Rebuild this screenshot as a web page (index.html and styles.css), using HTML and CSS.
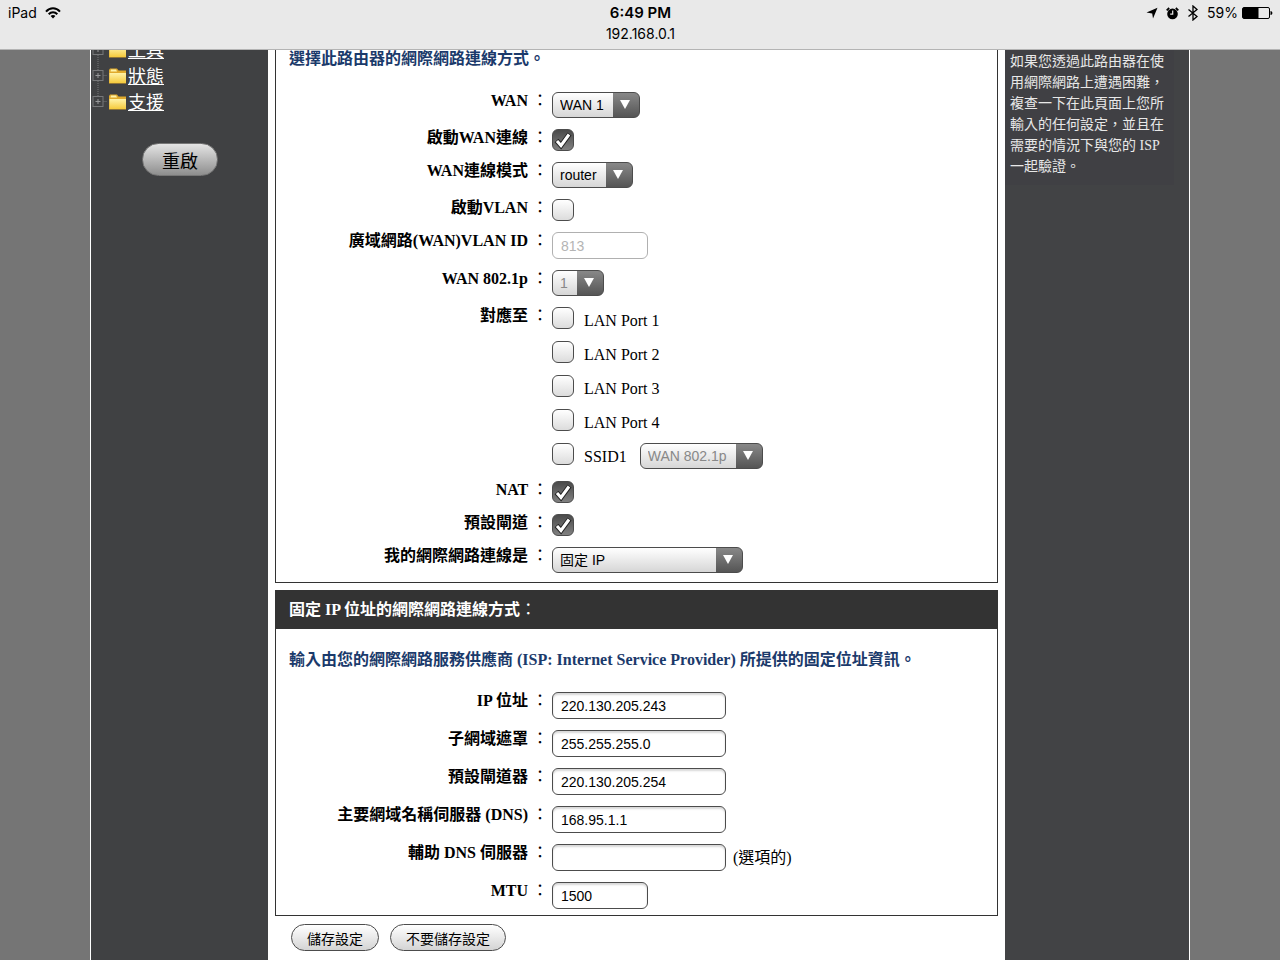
FILE: index.html
```
<!DOCTYPE html>
<html lang="zh-Hant">
<head>
    <meta charset="UTF-8">
    <meta name="viewport" content="width=device-width, initial-scale=1.0">
    <title>192.168.0.1</title>
    <link rel="stylesheet" href="styles.css">
</head>
<body>
    <header class="topbar">
        <div class="status">
            <div class="status-left">
                <span>iPad</span>
                <svg width="16" height="12" viewBox="0 0 16 12" fill="none" stroke="#000" stroke-width="2">
                    <path d="M1 4.6C5 .2 11 .2 15 4.6M3.7 7.2c2.4-2.6 6.2-2.6 8.6 0"/>
                    <path d="M8 11.5L5.6 9.1c1.3-1.4 3.5-1.4 4.8 0z" fill="#000" stroke="none"/>
                </svg>
            </div>
            <strong class="time">6:49 PM</strong>
            <div class="status-right">
                <svg width="12" height="12" viewBox="0 0 12 12"><path d="M11.5.7L7 11.6 6.2 6.4.5 5.4z"/></svg>
                <svg width="13" height="13" viewBox="0 0 13 13">
                    <circle cx="6.5" cy="6.9" r="5.3"/>
                    <path d="M.7 3.4L3.2 1M9.8 1l2.5 2.4" stroke="#000" stroke-width="1.8"/>
                    <path d="M6.7 3.6v3.6H4.200" fill="none" stroke="#e8e8e8" stroke-width="1.2"/>
                </svg>
                <svg width="12" height="16" viewBox="0 0 12 16" fill="none" stroke="#000" stroke-width="1.3"><path d="M1.500 4.500l8.500 7L6 15V1l4 3.500-8.500 7"/></svg>
                <span class="battery">59%
                    <svg width="31" height="12" viewBox="0 0 31 12">
                        <rect x=".5" y=".5" width="27" height="11" rx="1.5" fill="none" stroke="#000"/>
                        <path d="M1 1h15.500v10H1zM28.500 4c2.500 0 2.500 4 0 4z"/>
                    </svg>
                </span>
            </div>
        </div>
        <div class="address">192.168.0.1</div>
    </header>

    <div class="page">
        <aside class="sidebar">
            <ul class="tree">
                <li>
                    <svg class="node" width="37" height="26" viewBox="0 0 36 26"><use href="#folder"/></svg>
                    <a href="#">工具</a>
                </li>
                <li>
                    <svg class="node" width="37" height="26" viewBox="0 0 36 26"><use href="#folder"/></svg>
                    <a href="#">狀態</a>
                </li>
                <li>
                    <svg class="node" width="37" height="26" viewBox="0 0 36 26">
                        <defs>
                            <linearGradient id="yellow" x2="0" y2="1">
                                <stop offset="0" stop-color="#fff3a8"/>
                                <stop offset="1" stop-color="#f5ca3c"/>
                            </linearGradient>
                            <g id="folder">
                                <path d="M6.500 -9v15M12 11.500h4" stroke="#77787a" stroke-dasharray="1 1"/>
                                <rect x="1.500" y="6.500" width="10" height="10" fill="none" stroke="#77787a"/>
                                <path d="M4 11.500h5M6.500 9v5" stroke="#97989a"/>
                                <path d="M17.500 19.500V6l1-1.500h7l1.500 2h7.500v13z" fill="#e0aa2c"/>
                                <path d="M18 19V9h16.500v10z" fill="url(#yellow)"/>
                                <path d="M19 7.500l.5-2h5l1 2z" fill="#fff3a8"/>
                            </g>
                        </defs>
                        <use href="#folder"/>
                    </svg>
                    <a href="#">支援</a>
                </li>
            </ul>
            <button type="button" class="btn btn-restart">重啟</button>
        </aside>

        <main class="content">
            <form>
                <section class="panel panel-first">
                    <p class="intro">選擇此路由器的網際網路連線方式。</p>
                    <div class="rows">
                        <div class="row">
                            <label class="name" for="wan">WAN <span>：</span></label>
                            <select id="wan"><option>WAN 1</option></select>
                        </div>
                        <div class="row">
                            <label class="name" for="wanOn">啟動WAN連線 <span>：</span></label>
                            <input type="checkbox" id="wanOn" checked>
                        </div>
                        <div class="row">
                            <label class="name" for="wanMode">WAN連線模式 <span>：</span></label>
                            <select id="wanMode"><option>router</option></select>
                        </div>
                        <div class="row">
                            <label class="name" for="vlanOn">啟動VLAN <span>：</span></label>
                            <input type="checkbox" id="vlanOn">
                        </div>
                        <div class="row">
                            <label class="name" for="vlanId">廣域網路(WAN)VLAN ID <span>：</span></label>
                            <input type="text" class="short" id="vlanId" value="813" disabled>
                        </div>
                        <div class="row">
                            <label class="name" for="wan8021p">WAN 802.1p <span>：</span></label>
                            <select id="wan8021p" disabled><option>1</option></select>
                        </div>
                        <div class="row">
                            <div class="name">對應至 <span>：</span></div>
                            <div class="ports">
                                <div class="port"><input type="checkbox" id="lan1"><label for="lan1">LAN Port 1</label></div>
                                <div class="port"><input type="checkbox" id="lan2"><label for="lan2">LAN Port 2</label></div>
                                <div class="port"><input type="checkbox" id="lan3"><label for="lan3">LAN Port 3</label></div>
                                <div class="port"><input type="checkbox" id="lan4"><label for="lan4">LAN Port 4</label></div>
                                <div class="port">
                                    <input type="checkbox" id="ssid1"><label for="ssid1">SSID1</label>
                                    <select aria-label="SSID1 WAN 802.1p" disabled><option>WAN 802.1p</option></select>
                                </div>
                            </div>
                        </div>
                        <div class="row">
                            <label class="name" for="nat">NAT <span>：</span></label>
                            <input type="checkbox" id="nat" checked>
                        </div>
                        <div class="row">
                            <label class="name" for="defGw">預設閘道 <span>：</span></label>
                            <input type="checkbox" id="defGw" checked>
                        </div>
                        <div class="row">
                            <label class="name" for="connType">我的網際網路連線是 <span>：</span></label>
                            <select class="wide" id="connType"><option>固定 IP</option></select>
                        </div>
                    </div>
                </section>

                <section class="panel">
                    <h2>固定 IP 位址的網際網路連線方式<span>：</span></h2>
                    <p class="intro">輸入由您的網際網路服務供應商 (ISP: Internet Service Provider) 所提供的固定位址資訊。</p>
                    <div class="rows">
                        <div class="row">
                            <label class="name" for="ip">IP 位址 <span>：</span></label>
                            <input type="text" id="ip" value="220.130.205.243">
                        </div>
                        <div class="row">
                            <label class="name" for="mask">子網域遮罩 <span>：</span></label>
                            <input type="text" id="mask" value="255.255.255.0">
                        </div>
                        <div class="row">
                            <label class="name" for="gateway">預設閘道器 <span>：</span></label>
                            <input type="text" id="gateway" value="220.130.205.254">
                        </div>
                        <div class="row">
                            <label class="name" for="dns1">主要網域名稱伺服器 (DNS) <span>：</span></label>
                            <input type="text" id="dns1" value="168.95.1.1">
                        </div>
                        <div class="row">
                            <label class="name" for="dns2">輔助 DNS 伺服器 <span>：</span></label>
                            <input type="text" id="dns2">
                            <span class="note">(選項的)</span>
                        </div>
                        <div class="row">
                            <label class="name" for="mtu">MTU <span>：</span></label>
                            <input type="text" class="short" id="mtu" value="1500">
                        </div>
                    </div>
                </section>

                <div class="actions">
                    <button type="button" class="btn">儲存設定</button>
                    <button type="button" class="btn">不要儲存設定</button>
                </div>
            </form>
        </main>

        <aside class="help">
            <p>如果您透過此路由器在使用網際網路上遭遇困難，複查一下在此頁面上您所輸入的任何設定，並且在需要的情況下與您的 ISP 一起驗證。</p>
        </aside>
    </div>
</body>
</html>
```
FILE: styles.css
```
* {
    box-sizing: border-box;
}
body {
    margin: 0;
    height: 100vh;
    display: flex;
    flex-direction: column;
    overflow: hidden;
    background: #757575;
    font-family: "Liberation Serif", "Noto Sans CJK TC", serif;
    font-size: 16px;
    color: #000;
}

/* status bar */
.topbar {
    flex: none;
    height: 50px;
    padding: 3px 7px 0 8px;
    background: #e9e9e9;
    border-bottom: 1px solid #b4b4b4;
    font-family: Inter, "Liberation Sans", sans-serif;
    font-size: 14px;
    line-height: 20px;
}
.status {
    display: grid;
    grid-template-columns: 1fr auto 1fr;
    align-items: center;
}
.status-left,
.status-right {
    display: flex;
    align-items: center;
    gap: 8px;
}
.status-right {
    justify-content: flex-end;
}
.battery {
    display: flex;
    align-items: center;
    gap: 4px;
}
.time {
    font-size: 15px;
    font-weight: 600;
}
.address {
    text-align: center;
    line-height: 22px;
}

/* three columns */
.page {
    flex: 1;
    min-height: 0;
    margin: 0 90px;
    display: grid;
    grid-template-columns: 177px 1fr 184px;
    border: solid #fff;
    border-width: 0 1px;
    overflow: hidden;
}
.sidebar {
    background: #404143;
    overflow: hidden;
}
.tree {
    list-style: none;
    margin: -12px 0 0;
    padding: 0;
}
.tree li {
    display: flex;
    align-items: center;
    height: 26px;
}
.tree a {
    color: #fff;
    font-size: 18px;
    line-height: 26px;
}
.node {
    overflow: visible;
}
.content {
    background: #fff;
    padding: 0 7px;
}
.help {
    background: #424345;
    color: #e8e8e8;
}
.help p {
    margin: 0 15px 0 0;
    padding: 1px 0 8px 5px;
    background: #404044;
    font-size: 14px;
    line-height: 21px;
}

/* panels */
.panel {
    margin-bottom: 7px;
    padding-bottom: 6px;
    border: 1px solid #333;
}
.panel-first {
    padding-bottom: 9px;
    border-top: 0;
}
.panel h2 {
    margin: 0 0 19px;
    padding: 0 13px;
    background: #333;
    color: #fff;
    font-size: 16px;
    line-height: 38px;
}
.intro {
    margin: 0;
    padding: 0 13px;
    color: #1b3a6b;
    font-weight: bold;
    line-height: 24px;
}
.panel-first .intro {
    line-height: 18px;
}
.rows {
    display: flex;
    flex-direction: column;
    gap: 11px;
    padding-top: 20px;
}
.panel-first .rows {
    padding-top: 24px;
}
.row {
    display: flex;
    align-items: flex-start;
    gap: 4px;
}
.name {
    width: 272px;
    text-align: right;
    font-weight: bold;
    line-height: 18px;
}
.name span,
.panel h2 span {
    font-weight: normal;
}
.note {
    padding-left: 3px;
    line-height: 27px;
}
.ports {
    display: flex;
    flex-direction: column;
    gap: 12px;
    padding-bottom: 1px;
}
.port {
    display: flex;
}
.port label {
    height: 22px;
    padding: 0 13px 0 10px;
    line-height: 28px;
}

/* controls */
select,
input {
    margin: 0;
    appearance: none;
    border: 1px solid #4c4c4c;
    border-radius: 6px;
    font-family: "Liberation Sans", "Noto Sans CJK TC", sans-serif;
    font-size: 14px;
    color: #000;
}
select {
    height: 26px;
    padding: 0 35px 0 7px;
    background:
        url("data:image/svg+xml,%3Csvg xmlns='http://www.w3.org/2000/svg' width='10' height='9'%3E%3Cpath d='M0 0h10L5 9z' fill='white'/%3E%3C/svg%3E") right 9px top 7px / 10px 9px no-repeat,
        linear-gradient(#888, #555) right / 26px 100% no-repeat,
        linear-gradient(#fff, #d6d6d6);
}
select:disabled {
    opacity: 1;
    color: #888;
}
select.wide {
    width: 191px;
}
input[type="text"] {
    width: 174px;
    height: 27px;
    padding: 0 8px;
    background: #fff;
    box-shadow: inset 0 2px 2px #d8d8d8;
}
input[type="text"].short {
    width: 96px;
}
input[type="text"]:disabled {
    border-color: #b0b0b0;
    color: #b4b4b4;
    box-shadow: none;
}
input[type="checkbox"] {
    width: 22px;
    height: 22px;
    background: linear-gradient(#fff, #dcdcdc);
}
input[type="checkbox"]:checked {
    background:
        url("data:image/svg+xml,%3Csvg xmlns='http://www.w3.org/2000/svg' width='20' height='20' fill='none'%3E%3Cpath d='M3.5 10.500l4.500 5L16.500 4' stroke='%23222' stroke-width='5'/%3E%3Cpath d='M4 11l4 4.500L16 4.500' stroke='white' stroke-width='3'/%3E%3C/svg%3E") center no-repeat,
        linear-gradient(#4a4a4a, #808080);
}
.btn {
    height: 27px;
    padding: 0 15px;
    border: 1px solid #4c4c4c;
    border-radius: 14px;
    background: linear-gradient(#fff, #d4d4d4);
    font-family: "Liberation Sans", "Noto Sans CJK TC", sans-serif;
    font-size: 14px;
    color: #000;
}
.btn-restart {
    display: block;
    height: 33px;
    margin: 27px 0 0 51px;
    padding: 0 19px;
    border-color: #777;
    border-radius: 17px;
    background: linear-gradient(#e4e4e4, #8e8e8e);
    font-size: 18px;
}
.actions {
    display: flex;
    gap: 11px;
    padding: 1px 16px;
}
```
